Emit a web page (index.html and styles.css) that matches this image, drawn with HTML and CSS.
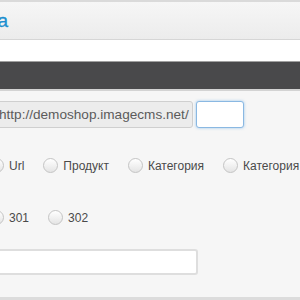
FILE: index.html
```html
<!DOCTYPE html>
<html lang="ru">
<head>
<meta charset="utf-8">
<title>Создание редиректа</title>
<link rel="stylesheet" href="styles.css">
</head>
<body>
<div class="topline"></div>
<header class="header">
  <div class="title-wrap"><h1 class="title">Создание редиректа</h1></div>
</header>
<div class="band"></div>
<div class="toolbar"></div>
<main class="content">
  <div class="url-row">
    <span class="prefix">http://demoshop.imagecms.net/</span>
    <input class="url-input" type="text">
  </div>
  <div class="radio-row type-row">
    <label class="opt"><input class="radio" type="radio" name="type" checked><span>Url</span></label>
    <label class="opt"><input class="radio" type="radio" name="type"><span>Продукт</span></label>
    <label class="opt"><input class="radio" type="radio" name="type"><span>Категория</span></label>
    <label class="opt"><input class="radio" type="radio" name="type"><span>Категория</span></label>
  </div>
  <div class="radio-row code-row">
    <label class="opt"><input class="radio" type="radio" name="code" checked><span>301</span></label>
    <label class="opt"><input class="radio" type="radio" name="code"><span>302</span></label>
  </div>
  <input class="text-input" type="text">
</main>
<div class="bottomline"></div>
</body>
</html>
```

FILE: styles.css
```css
html, body {
  margin: 0;
  padding: 0;
}
body {
  width: 300px;
  height: 300px;
  overflow: hidden;
  background: #f6f6f6;
  font-family: "Liberation Sans", Arial, sans-serif;
  display: flex;
  flex-direction: column;
}
.topline {
  height: 2px;
  background: #dadada;
  flex: none;
}
.header {
  height: 37px;
  flex: none;
  background: linear-gradient(#f6f6f6, #ececec);
  border-bottom: 1px solid #d6d6d6;
  display: flex;
  align-items: center;
}
.title-wrap {
  width: 8px;
  display: flex;
  justify-content: flex-end;
}
.title {
  margin: 0;
  white-space: nowrap;
  font-size: 19px;
  font-weight: normal;
  color: #1b8fcf;
  line-height: 22px;
  padding-top: 1px;
  -webkit-text-stroke: 0.3px #1b8fcf;
}
.band {
  height: 21px;
  flex: none;
  background: #fff;
}
.toolbar {
  height: 27px;
  flex: none;
  background: #49494b;
  border-top: 1px solid #a0a0a0;
  border-bottom: 2px solid #d3d3d3;
}
.content {
  flex: 1;
  margin-left: -11px;
  padding-top: 10px;
  display: flex;
  flex-direction: column;
  align-items: flex-start;
}
.url-row {
  display: flex;
  align-items: center;
  gap: 3px;
}
.prefix {
  box-sizing: border-box;
  height: 27px;
  padding: 0 3px 0 9px;
  display: flex;
  align-items: center;
  background: #ececec;
  border: 1px solid #cfcfcf;
  border-radius: 0 3px 3px 0;
  font-size: 13.6px;
  color: #5b5b5b;
}
.url-input {
  box-sizing: border-box;
  width: 48px;
  height: 27px;
  margin: 0;
  background: #fff;
  border: 1px solid #8ab8e2;
  border-radius: 3px;
  box-shadow: 0 0 3px rgba(82, 160, 230, 0.55);
  outline: none;
}
.radio-row {
  display: flex;
  gap: 19px;
}
.type-row {
  margin-top: 30px;
}
.code-row {
  margin-top: 37px;
}
.opt {
  display: flex;
  align-items: center;
  gap: 5px;
  font-size: 12px;
  color: #4a4a4a;
}
.radio {
  appearance: none;
  -webkit-appearance: none;
  box-sizing: border-box;
  width: 15px;
  height: 15px;
  margin: 0;
  border-radius: 50%;
  border: 1px solid #c4c4c4;
  background: linear-gradient(#ffffff, #e4e4e4);
  display: grid;
  place-items: center;
}
.radio:checked::after {
  content: "";
  width: 7px;
  height: 7px;
  border-radius: 50%;
  background: #4a4a4a;
}
.text-input {
  box-sizing: border-box;
  margin: 24px 0 0;
  width: 209px;
  height: 26px;
  background: #fff;
  border: 2px solid #dedede;
  border-radius: 3px;
  outline: none;
}
.bottomline {
  height: 3px;
  flex: none;
  background: #dcdcdc;
}
```
